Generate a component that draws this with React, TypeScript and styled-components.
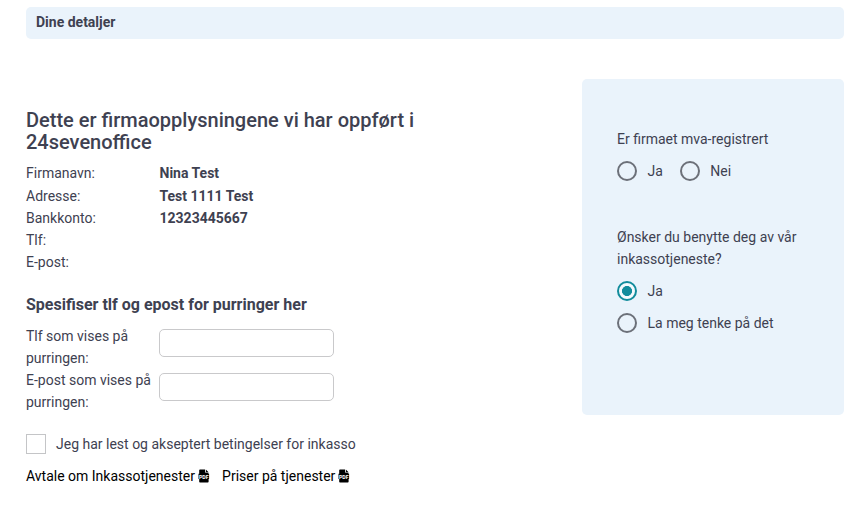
import { useState } from "react";
import styled, { createGlobalStyle } from "styled-components";

const GlobalStyle = createGlobalStyle`
  * {
    box-sizing: border-box;
  }
  body {
    margin: 0;
    background-color: #fff;
    color: #3e4151;
    font-family: Roboto, "Liberation Sans", sans-serif;
    font-size: 14px;
    line-height: 22px;
  }
`;

const Page = styled.main`
  width: 867px;
  height: 507px;
  padding: 7px 23px 0 26px;
  overflow: hidden;
`;

const SectionHeader = styled.header`
  height: 32px;
  padding: 4px 10px;
  border-radius: 5px;
  background-color: #eaf3fb;
  font-weight: 700;
`;

const Content = styled.div`
  display: flex;
  justify-content: space-between;
  align-items: flex-start;
  margin-top: 40px;
`;

const Details = styled.section`
  width: 430px;
  padding-top: 30px;
`;

const Title = styled.h2`
  margin: 0 0 9px;
  font-size: 20px;
  font-weight: 500;
  line-height: 22px;
`;

const InfoList = styled.dl`
  display: grid;
  grid-template-columns: 133.5px 1fr;
  grid-template-rows: 23px repeat(4, 22px);
  margin: 0;
`;

const Label = styled.dt``;

const Value = styled.dd`
  margin: 0;
  font-weight: 700;
`;

const SubTitle = styled.h3`
  margin: 21px 0 9px;
  font-size: 16px;
  font-weight: 700;
  line-height: 22px;
`;

const Field = styled.label`
  display: grid;
  grid-template-columns: 133px 175px;
  align-items: center;
  height: 44px;
  span {
    width: 128px;
  }
`;

const Input = styled.input`
  width: 175px;
  height: 28px;
  margin-top: -8px;
  padding: 0 8px;
  border: 1px solid #c9c9cb;
  border-radius: 5px;
  outline: none;
  background-color: #fff;
  font: inherit;
`;

const Terms = styled.label`
  display: flex;
  align-items: center;
  gap: 10px;
  margin-top: 20px;
`;

const Checkbox = styled.input`
  appearance: none;
  width: 20px;
  height: 20px;
  margin: 0;
  border: 1px solid #c4c5c7;
  background-color: #fff;
  &:checked {
    background-color: #128c9c;
  }
`;

const Documents = styled.nav`
  display: flex;
  gap: 12.5px;
  margin-top: 10px;
`;

const DocumentLink = styled.a`
  display: flex;
  align-items: center;
  gap: 2.6px;
  color: #000;
  text-decoration: none;
`;

const Panel = styled.aside`
  width: 262px;
  height: 336px;
  padding: 49px 35px;
  border-radius: 5px;
  background-color: #eaf3fb;
`;

const Question = styled.p`
  margin: 0 0 10px;
`;

const Options = styled.div<{ $vertical?: boolean }>`
  display: flex;
  flex-direction: ${(props) => (props.$vertical ? "column" : "row")};
  gap: ${(props) => (props.$vertical ? "10px" : "17px")};
  margin-bottom: 44px;
`;

const Option = styled.label`
  display: flex;
  align-items: center;
  gap: 10.5px;
`;

const Radio = styled.input`
  appearance: none;
  width: 20px;
  height: 20px;
  margin: 0;
  border: 2px solid #6c7079;
  border-radius: 50%;
  &:checked {
    border-color: #128c9c;
    background: radial-gradient(circle, #128c9c 4.7px, #f5fafd 5.3px);
  }
`;

const company = [
    { label: "Firmanavn:", value: "Nina Test" },
    { label: "Adresse:", value: "Test 1111 Test" },
    { label: "Bankkonto:", value: "12323445667" },
    { label: "Tlf:", value: "" },
    { label: "E-post:", value: "" },
]

function PdfIcon() {
    return (
        <svg width="12" height="14" viewBox="0 0 12 14" aria-hidden="true">
          <path d="M1.2 1.2Q1.2.4 2 .4h5v3.2h3.4v1.1h.7v5.2h-.5v2.8q0 .8-.8.8H2q-.8 0-.8-.8V9.9H.5V4.7h.7z" fill="#000" />
          <path d="M7.8.6l2.5 2.5H7.8z" fill="#000" />
          <text x="5.8" y="9.5" textAnchor="middle" fontSize="5.2" fontWeight="700" fill="#fff">PDF</text>
        </svg>
    )
}

function App() {
    const [vat, setVat] = useState("")
    const [collection, setCollection] = useState("ja")

    return (
        <>
          <GlobalStyle />
          <Page>
            <SectionHeader>Dine detaljer</SectionHeader>
            <Content>
              <Details>
                <Title>Dette er firmaopplysningene vi har oppført i 24sevenoffice</Title>
                <InfoList>
                  {company.map((row) => [
                    <Label key={row.label}>{row.label}</Label>,
                    <Value key={row.label + "value"}>{row.value}</Value>,
                  ])}
                </InfoList>
                <SubTitle>Spesifiser tlf og epost for purringer her</SubTitle>
                <Field>
                  <span>Tlf som vises på purringen:</span>
                  <Input type="tel" />
                </Field>
                <Field>
                  <span>E-post som vises på purringen:</span>
                  <Input type="email" />
                </Field>
                <Terms>
                  <Checkbox type="checkbox" />
                  Jeg har lest og akseptert betingelser for inkasso
                </Terms>
                <Documents>
                  <DocumentLink href="#">Avtale om Inkassotjenester <PdfIcon /></DocumentLink>
                  <DocumentLink href="#">Priser på tjenester <PdfIcon /></DocumentLink>
                </Documents>
              </Details>
              <Panel>
                <Question>Er firmaet mva-registrert</Question>
                <Options>
                  <Option>
                    <Radio type="radio" name="vat" checked={vat === "ja"} onChange={() => setVat("ja")} />
                    Ja
                  </Option>
                  <Option>
                    <Radio type="radio" name="vat" checked={vat === "nei"} onChange={() => setVat("nei")} />
                    Nei
                  </Option>
                </Options>
                <Question>Ønsker du benytte deg av vår inkassotjeneste?</Question>
                <Options $vertical>
                  <Option>
                    <Radio type="radio" name="collection" checked={collection === "ja"} onChange={() => setCollection("ja")} />
                    Ja
                  </Option>
                  <Option>
                    <Radio type="radio" name="collection" checked={collection === "senere"} onChange={() => setCollection("senere")} />
                    La meg tenke på det
                  </Option>
                </Options>
              </Panel>
            </Content>
          </Page>
        </>
    )
}

export default App
